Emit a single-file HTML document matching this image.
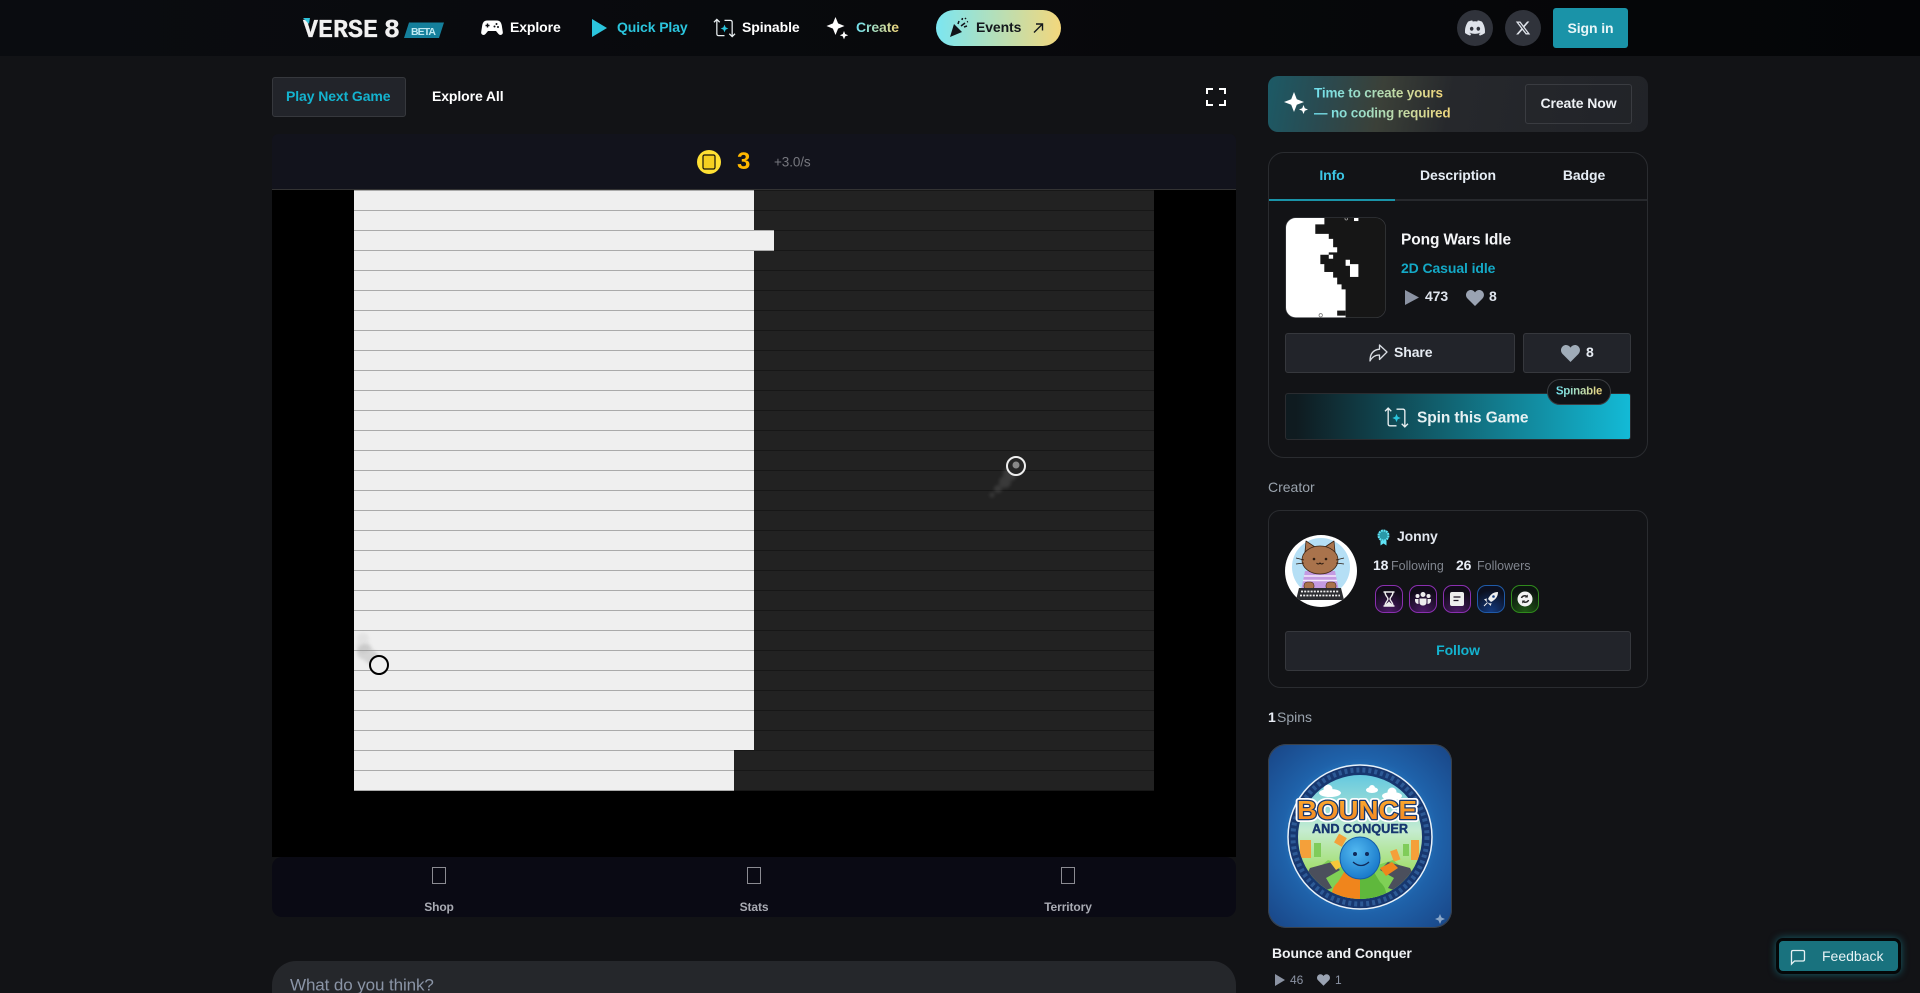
<!DOCTYPE html>
<html lang="en"><head><meta charset="utf-8"><title>Pong Wars Idle - Verse 8</title>
<style>
*{box-sizing:border-box;margin:0;padding:0}
html,body{width:1920px;height:993px;overflow:hidden;background:#121316;font-family:"Liberation Sans",sans-serif;color:#fff}
#p{position:relative;width:1920px;height:993px;overflow:hidden;background:#121316}
.a{position:absolute}
.t{position:absolute;white-space:nowrap;line-height:1;transform:translateY(-50%);font-size:14px;font-weight:700;letter-spacing:-.1px}
.c{transform:translate(-50%,-50%)}
.grad{background:linear-gradient(90deg,#6fe0ef,#f0d67c);-webkit-background-clip:text;background-clip:text;color:transparent}
.btn{position:absolute;background:#22242a;border:1px solid #36383d;border-radius:3px}
.w{position:absolute;background-color:#efefef;background-image:repeating-linear-gradient(to bottom,#aaa 0 1px,transparent 1px 20px)}
.d{position:absolute;background-color:#222;background-image:repeating-linear-gradient(to bottom,#171717 0 1px,transparent 1px 20px)}
.tofu{position:absolute;width:14px;height:17px;border:1px solid #8b8b92;top:867px}
.bdg{position:absolute;top:585px;width:28px;height:28px;border-radius:9px;border:1.5px solid #8a2fb0;background:radial-gradient(circle at 50% 100%,#4b1a66,#100c18 75%)}
svg{position:absolute;display:block;overflow:visible}
</style></head><body><div id="p">

<!-- header -->
<div class="a" style="left:0;top:0;width:1920px;height:56px;background:linear-gradient(90deg,#0a0c10,#08090c 50%,#040507)"></div>
<svg style="left:300px;top:15px" width="150" height="28" viewBox="0 0 150 28">
<text x="3" y="22" font-family="Liberation Mono" font-weight="700" font-size="26" fill="#f1f1f1" stroke="#f1f1f1" stroke-width=".3" textLength="75" lengthAdjust="spacingAndGlyphs">VERSE</text>
<text x="84" y="22" font-family="Liberation Mono" font-weight="700" font-size="26" fill="#f1f1f1" stroke="#f1f1f1" stroke-width=".3" textLength="16" lengthAdjust="spacingAndGlyphs">8</text>
<path d="M3 3h7l-1 6z" fill="#2fc4dc"/>
<path d="M109 7.500h35l-5 15.500h-35z" fill="#147f9b"/>
<text x="111" y="20" font-family="Liberation Sans" font-weight="700" font-size="10.500" fill="#bfe9f2" textLength="25">BETA</text>
</svg>
<svg style="left:481px;top:17px" width="22" height="22" viewBox="0 0 22 22"><path d="M6 3.500h10c2.700 0 4.200 1.800 4.800 5l1 6.500c.4 2.600-2.500 4-4.300 2l-2.500-3h-8l-2.500 3c-1.800 2-4.700.6-4.300-2l1-6.500c.6-3.200 2.100-5 4.800-5z" fill="#fff"/><path d="M6.500 6.500v4M4.500 8.500h4" stroke="#0a0c10" stroke-width="1.400"/><circle cx="15.500" cy="7" r="1" fill="#0a0c10"/><circle cx="13.500" cy="9.500" r="1" fill="#0a0c10"/><circle cx="17" cy="10" r="1" fill="#0a0c10"/></svg>
<span class="t" style="left:510px;top:27px">Explore</span>
<svg style="left:592px;top:19px" width="16" height="18" viewBox="0 0 16 18"><path d="M0 0l15 9-15 9z" fill="#2bc5dd"/></svg>
<span class="t" style="left:617px;top:27px;color:#2bc5dd">Quick Play</span>
<svg style="left:713px;top:17px" width="23" height="22" viewBox="0 0 24 22" fill="none" stroke="#e8eef0" stroke-width="1.300"><path d="M4 2V17q0 2 2 2h6M1 5l3-3 3 3"/><path d="M20 20V5q0-2-2-2h-6M17 17l3 3 3-3"/><path d="M12 7.500l1.200 2.800 2.800 1.200-2.800 1.200-1.200 2.800-1.200-2.800-2.800-1.200 2.800-1.200z" fill="#2bc5dd" stroke="none"/></svg>
<span class="t" style="left:742px;top:27px">Spinable</span>
<svg style="left:827px;top:17px" width="22" height="23" viewBox="0 0 22 23"><path d="M8.500 0l2.600 6.400 6.400 2.600-6.400 2.600-2.600 6.400-2.600-6.400L-.5 9l6.400-2.600z" fill="#fff"/><path d="M17 14l1.200 3 3 1.200-3 1.200-1.200 3-1.200-3-3-1.200 3-1.200z" fill="#fff"/></svg>
<span class="t grad" style="left:856px;top:27px">Create</span>
<div class="a" style="left:936px;top:10px;width:125px;height:36px;border-radius:18px;background:linear-gradient(90deg,#7be6f1,#f3d77c)"></div>
<svg style="left:949px;top:17px" width="20" height="21" viewBox="0 0 20 21" fill="#10151a"><path d="M1 20l4-13 8 8z"/><path d="M9 7l1-3M13 3l.5-2M12 9l4-3M15 10l3-1M16 2l1-1M18 5l1-.5" stroke="#10151a" stroke-width="1.500"/></svg>
<span class="t" style="left:976px;top:27px;color:#14181c;font-weight:700">Events</span>
<svg style="left:1032px;top:22px" width="12" height="12" viewBox="0 0 12 12" fill="none" stroke="#14181c" stroke-width="1.400"><path d="M2 10.500L10 2.500M4 2h6.500v6.500"/></svg>
<div class="a" style="left:1457px;top:10px;width:36px;height:36px;border-radius:50%;background:#30333b"></div>
<svg style="left:1465px;top:18px" width="20" height="20" viewBox="0 0 24 24"><path fill="#dfe3ea" d="M20.317 4.370a19.791 19.791 0 0 0-4.885-1.515.074.074 0 0 0-.079.037c-.21.375-.444.864-.608 1.250a18.270 18.270 0 0 0-5.487 0 12.640 12.640 0 0 0-.617-1.250.077.077 0 0 0-.079-.037A19.736 19.736 0 0 0 3.677 4.370a.07.07 0 0 0-.032.027C.533 9.046-.32 13.580.099 18.057a.082.082 0 0 0 .031.057 19.900 19.900 0 0 0 5.993 3.030.078.078 0 0 0 .084-.028c.462-.63.874-1.295 1.226-1.994a.076.076 0 0 0-.041-.106 13.107 13.107 0 0 1-1.872-.892.077.077 0 0 1-.008-.128 10.200 10.200 0 0 0 .372-.292.074.074 0 0 1 .077-.01c3.928 1.793 8.180 1.793 12.062 0a.074.074 0 0 1 .078.01c.12.098.246.198.373.292a.077.077 0 0 1-.006.127 12.299 12.299 0 0 1-1.873.892.077.077 0 0 0-.041.107c.36.698.772 1.362 1.225 1.993a.076.076 0 0 0 .084.028 19.839 19.839 0 0 0 6.002-3.030.077.077 0 0 0 .032-.054c.5-5.177-.838-9.674-3.549-13.660a.061.061 0 0 0-.031-.03zM8.020 15.330c-1.183 0-2.157-1.085-2.157-2.419 0-1.333.956-2.419 2.157-2.419 1.210 0 2.176 1.096 2.157 2.420 0 1.333-.956 2.418-2.157 2.418zm7.975 0c-1.183 0-2.157-1.085-2.157-2.419 0-1.333.955-2.419 2.157-2.419 1.210 0 2.176 1.096 2.157 2.420 0 1.333-.946 2.418-2.157 2.418z"/></svg>
<div class="a" style="left:1505px;top:10px;width:36px;height:36px;border-radius:50%;background:#30333b"></div>
<svg style="left:1515px;top:20px" width="16" height="16" viewBox="0 0 24 24"><path fill="#dfe3ea" d="M18.244 2.250h3.308l-7.227 8.260 8.502 11.240H16.170l-5.214-6.817L4.990 21.750H1.680l7.730-8.835L1.254 2.250H8.080l4.713 6.231zm-1.161 17.520h1.833L7.084 4.126H5.117z"/></svg>
<div class="a" style="left:1553px;top:8px;width:75px;height:40px;border-radius:3px;background:#1a93a8"></div>
<span class="t c" style="left:1590.500px;top:27.500px;color:#e8f6f8">Sign in</span>

<!-- top tabs -->
<div class="btn" style="left:272px;top:77px;width:134px;height:40px"></div>
<span class="t" style="left:286px;top:96px;color:#14b3cf">Play Next Game</span>
<span class="t" style="left:432px;top:96px">Explore All</span>
<svg style="left:1205px;top:87px" width="22" height="20" viewBox="0 0 22 20" fill="none" stroke="#fff" stroke-width="2"><path d="M2 7V2h6M14 2h6v5M20 13v5h-6M8 18H2v-5"/></svg>

<!-- game -->
<div class="a" style="left:272px;top:134px;width:964px;height:56px;background:#12131c;border-radius:6px 6px 0 0"></div>
<div class="a" style="left:272px;top:189px;width:964px;height:668px;background:#000;border-top:1px solid #333"></div>
<svg style="left:697px;top:150px" width="24" height="24" viewBox="0 0 24 24"><circle cx="12" cy="12" r="12" fill="#ffe033"/><rect x="6" y="5" width="12" height="14" rx="1.500" fill="#f5cf20" stroke="#15120a" stroke-width="1.200"/></svg>
<span class="t" style="left:737px;top:162px;color:#ffb800;font-size:24px;font-weight:700">3</span>
<span class="t" style="left:774px;top:162px;color:#77787f;font-size:13.500px;font-weight:400">+3.0/s</span>

<div class="w" style="left:354px;top:190px;width:400px;height:601px"></div>
<div class="d" style="left:754px;top:190px;width:400px;height:601px"></div>
<div class="w" style="left:754px;top:230px;width:20px;height:21px"></div>
<div class="d" style="left:734px;top:750px;width:20px;height:41px"></div>
<svg style="left:354px;top:190px" width="800" height="601" viewBox="0 0 800 601">
<defs><filter id="b" x="-50%" y="-50%" width="200%" height="200%"><feGaussianBlur stdDeviation="1.500"/></filter></defs>
<g fill="#999" opacity=".14" filter="url(#b)"><circle cx="9" cy="449" r="6"/><circle cx="9" cy="456" r="7"/></g>
<g fill="#888" opacity=".26" filter="url(#b)"><circle cx="11" cy="462" r="8"/><circle cx="17" cy="467" r="7"/><circle cx="20" cy="470" r="6"/></g>
<circle cx="25" cy="475" r="9" fill="#efefef" stroke="#000" stroke-width="2"/>
<g fill="#999" opacity=".2" filter="url(#b)"><circle cx="656" cy="284" r="7"/><circle cx="651" cy="292" r="6"/><circle cx="644" cy="299" r="4"/><circle cx="638" cy="305" r="2.500"/></g>
<circle cx="662" cy="276" r="9" fill="#262626" stroke="#eee" stroke-width="2"/><circle cx="662" cy="275" r="3.500" fill="#888"/>
</svg>

<div class="a" style="left:272px;top:857px;width:964px;height:60px;background:#0a0a14;border-radius:10px"></div>
<div class="tofu" style="left:432px"></div>
<div class="tofu" style="left:747px"></div>
<div class="tofu" style="left:1061px"></div>
<span class="t c" style="left:439px;top:907px;font-size:12px;color:#a9abb3">Shop</span>
<span class="t c" style="left:754px;top:907px;font-size:12px;color:#a9abb3">Stats</span>
<span class="t c" style="left:1068px;top:907px;font-size:12px;color:#a9abb3">Territory</span>

<!-- comment -->
<div class="a" style="left:272px;top:961px;width:964px;height:32px;background:#25272b;border-radius:24px 24px 0 0"></div>
<span class="t" style="left:290px;top:985px;font-size:17px;font-weight:400;color:#8a94a6;letter-spacing:-.1px">What do you think?</span>

<!-- banner -->
<div class="a" style="left:1268px;top:76px;width:380px;height:56px;border-radius:10px;background:linear-gradient(100deg,#1c5a66 0%,#2a4a50 15%,#3b4038 30%,#26282c 48%,#212328 100%)"></div>
<svg style="left:1284px;top:91px" width="24" height="25" viewBox="0 0 24 25"><path d="M10 1l2.800 7.200L20 11l-7.200 2.800L10 21l-2.800-7.200L0 11l7.200-2.800z" fill="#fff"/><path d="M19.500 14l1.300 3.200 3.200 1.300-3.200 1.300-1.300 3.200-1.300-3.200-3.200-1.300 3.200-1.300z" fill="#fff"/></svg>
<span class="t grad" style="left:1314px;top:93px;font-size:13.500px;letter-spacing:-.15px">Time to create yours</span>
<span class="t grad" style="left:1314px;top:113px;font-size:13.500px;letter-spacing:-.15px">— no coding required</span>
<div class="a" style="left:1525px;top:84px;width:107px;height:40px;border:1px solid #3a3c41;border-radius:3px"></div>
<span class="t c" style="left:1578.500px;top:103px;color:#eef1f5">Create Now</span>

<!-- info card -->
<div class="a" style="left:1268px;top:152px;width:380px;height:306px;border:1px solid #2a2c30;border-radius:16px"></div>
<div class="a" style="left:1269px;top:199px;width:378px;height:2px;background:#27292d"></div>
<div class="a" style="left:1269px;top:199px;width:126px;height:2px;background:#1a93a8"></div>
<span class="t c" style="left:1332px;top:175px;color:#3cc6e4">Info</span>
<span class="t c" style="left:1458px;top:175px;color:#e6edf5">Description</span>
<span class="t c" style="left:1584px;top:175px;color:#e6edf5">Badge</span>

<svg style="left:1285px;top:217px" width="101" height="101" viewBox="75 50 300 300">
<defs><clipPath id="tc"><rect x="77" y="52" width="297" height="297" rx="30"/></clipPath></defs>
<g clip-path="url(#tc)"><rect x="75" y="50" width="300" height="300" fill="#161616"/>
<path fill="#fff" d="M75 50H192V72H165V100H205V115H218V140H230V155H205V162H180V190H192V213H218V230H230V250H243V265H255V350H75z"/>
<rect x="205" y="162" width="13" height="28" fill="#161616"/><rect x="192" y="190" width="26" height="23" fill="#161616"/>
<rect x="205" y="162" width="13" height="12" fill="#fff"/>
<rect x="255" y="177" width="13" height="18" fill="#fff"/><rect x="268" y="190" width="25" height="38" fill="#fff"/>
<rect x="230" y="328" width="25" height="15" fill="#161616"/>
<rect x="280" y="52" width="13" height="10" fill="#fff"/>
<circle cx="257" cy="55" r="4" fill="none" stroke="#aaa" stroke-width="2"/><circle cx="181" cy="342" r="5" fill="#fff" stroke="#666" stroke-width="2"/></g>
<rect x="77" y="52" width="297" height="297" rx="30" fill="none" stroke="#3a3c40" stroke-width="2"/>
</svg>
<span class="t" style="left:1401px;top:240px;font-size:15.500px;color:#f5f6f8">Pong Wars Idle</span>
<span class="t" style="left:1401px;top:267.500px;font-size:14px;color:#14a9c6">2D Casual idle</span>
<svg style="left:1405px;top:290px" width="14" height="15" viewBox="0 0 14 15"><path d="M0 0l14 7.500L0 15z" fill="#8b93a3"/></svg>
<span class="t" style="left:1425px;top:296px;color:#dfe5ee;font-size:14px">473</span>
<svg style="left:1466px;top:290px" width="18" height="16" viewBox="0 0 18 16"><path d="M9 16L1.600 8.600C-1.800 5 .8 0 4.800 0 6.600 0 8 1 9 2.400 10 1 11.400 0 13.200 0c4 0 6.600 5 3.200 8.600z" fill="#9aa3b2"/></svg>
<span class="t" style="left:1489px;top:296px;color:#dfe5ee">8</span>

<div class="btn" style="left:1285px;top:333px;width:230px;height:40px"></div>
<svg style="left:1369px;top:344px" width="19" height="18" viewBox="0 0 19 18" fill="none" stroke="#d9dde3" stroke-width="1.300" stroke-linejoin="round"><path d="M10.500 1v4.200C4 5.800 1 10 1 17c2-4 5-6 9.500-6v4.500L18 8z"/></svg>
<span class="t" style="left:1394px;top:352px;color:#e6ebf2">Share</span>
<div class="btn" style="left:1523px;top:333px;width:108px;height:40px"></div>
<svg style="left:1561px;top:345px" width="19" height="17" viewBox="0 0 18 16"><path d="M9 16L1.600 8.600C-1.800 5 .8 0 4.800 0 6.600 0 8 1 9 2.400 10 1 11.400 0 13.200 0c4 0 6.600 5 3.200 8.600z" fill="#a0acb8"/></svg>
<span class="t" style="left:1586px;top:352px;color:#e6ebf2">8</span>

<div class="a" style="left:1285px;top:393px;width:346px;height:47px;border:1px solid #2a2c30;border-radius:3px;background:linear-gradient(90deg,#0f1b20 3%,#11606e 45%,#13bad6 100%)"></div>
<svg style="left:1384px;top:406px" width="25" height="23" viewBox="0 0 24 22" fill="none" stroke="#e8eef0" stroke-width="1.300"><path d="M4 2V17q0 2 2 2h6M1 5l3-3 3 3"/><path d="M20 20V5q0-2-2-2h-6M17 17l3 3 3-3"/><path d="M12 7.500l1.200 2.800 2.800 1.200-2.800 1.200-1.200 2.800-1.200-2.800-2.800-1.200 2.800-1.200z" fill="#2bc5dd" stroke="none"/></svg>
<span class="t" style="left:1417px;top:418px;font-size:15.500px;color:#e6f0f2">Spin this Game</span>
<div class="a" style="left:1547px;top:379px;width:64px;height:26px;border-radius:13px;background:#111316;border:1px solid #3a3c40"></div>
<span class="t grad c" style="left:1579px;top:392px;font-size:11.500px;font-weight:700;letter-spacing:-.2px">Spinable</span>

<!-- creator -->
<span class="t" style="left:1268px;top:487px;font-size:14px;font-weight:400;color:#9aa3ad;letter-spacing:0">Creator</span>
<div class="a" style="left:1268px;top:510px;width:380px;height:178px;border:1px solid #2a2c30;border-radius:12px"></div>
<svg style="left:1285px;top:535px" width="72" height="72" viewBox="0 0 72 72">
<defs><clipPath id="av"><circle cx="36" cy="36" r="36"/></clipPath></defs>
<g clip-path="url(#av)"><rect width="72" height="72" fill="#fff"/><circle cx="36" cy="32" r="29" fill="#b5dff5"/>
<path d="M20 36h30l4 20H16z" fill="#c39be2"/><path d="M19 41h32M18 45.500h34" stroke="#f3e9fb" stroke-width="1.600"/>
<path d="M20 17l1-11 9 6zM50 17l-1-11-9 6z" fill="#a9734c" stroke="#3a2415" stroke-width=".8" stroke-linejoin="round"/>
<ellipse cx="35" cy="25" rx="18" ry="14" fill="#a9734c" stroke="#3a2415" stroke-width=".8"/>
<circle cx="29" cy="24" r="1.300" fill="#2a1a10"/><circle cx="41" cy="24" r="1.300" fill="#2a1a10"/>
<path d="M31.500 28q1.800 2 3.500 0q1.800 2 3.500 0" fill="none" stroke="#2a1a10"/>
<path d="M11 23l8 2M11 29l8-1M59 23l-8 2M59 29l-8-1" stroke="#2a1a10" stroke-width=".8"/>
<rect x="19" y="47" width="10" height="8" rx="3.500" fill="#a9734c" stroke="#3a2415" stroke-width=".6"/><rect x="41" y="47" width="10" height="8" rx="3.500" fill="#a9734c" stroke="#3a2415" stroke-width=".6"/>
<path d="M14 53h42l3 12H11z" fill="#2c2d31"/><path d="M16 56.500h38M15 60.500h40" stroke="#eee" stroke-width="1.800" stroke-dasharray="2 1.200"/></g>
</svg>
<svg style="left:1376px;top:529px" width="15" height="17" viewBox="0 0 15 17"><circle cx="7.500" cy="6.500" r="5" fill="#2a98a8" stroke="#5fe3f5" stroke-width="2" stroke-dasharray="2 .6"/><path d="M4.500 11.500v5l3-2 3 2v-5" fill="#5fe3f5"/></svg>
<span class="t" style="left:1397px;top:536px;color:#e3e8f0">Jonny</span>
<span class="t" style="left:1373px;top:565px;color:#e8edf5">18</span>
<span class="t" style="left:1391px;top:565.500px;font-size:12.500px;font-weight:400;color:#80858e;letter-spacing:0">Following</span>
<span class="t" style="left:1456px;top:565px;color:#e8edf5">26</span>
<span class="t" style="left:1477px;top:565.500px;font-size:12.500px;font-weight:400;color:#80858e;letter-spacing:0">Followers</span>

<div class="bdg" style="left:1375px"></div>
<svg style="left:1382px;top:591px" width="14" height="16" viewBox="0 0 14 16"><path d="M1.500 1h11M1.500 15h11M3 1c0 4 3 5 3 7s-3 3-3 7M11 1c0 4-3 5-3 7s3 3 3 7" stroke="#eee" fill="none" stroke-width="1.400"/><path d="M3.500 15c0-3 3.500-3.500 3.500-5 0 1.500 3.500 2 3.500 5z" fill="#eee"/></svg>
<div class="bdg" style="left:1409px"></div>
<svg style="left:1415px;top:592px" width="16" height="14" viewBox="0 0 16 14" fill="#eee"><circle cx="8" cy="2.500" r="2.500"/><circle cx="2.500" cy="4" r="2"/><circle cx="13.500" cy="4" r="2"/><path d="M4.500 6.500h7v4c0 4-7 4-7 0zM0 7h3.500v5C1 12 0 10 0 8zM12.500 7H16v1c0 2-1 4-3.500 4z"/></svg>
<div class="bdg" style="left:1443px"></div>
<svg style="left:1450px;top:592px" width="14" height="14" viewBox="0 0 14 14"><rect width="14" height="14" rx="2" fill="#eee"/><path d="M3.500 5h7M3.500 8.500h5" stroke="#1a1020" stroke-width="1.300"/></svg>
<div class="bdg" style="left:1477px;border-color:#1f5aa8;background:radial-gradient(circle at 50% 100%,#123a80,#0c1020 75%)"></div>
<svg style="left:1483px;top:591px" width="16" height="16" viewBox="0 0 16 16"><path d="M15 1c-5 0-8 3-10 7l3 3c4-2 7-5 7-10z" fill="#eee"/><circle cx="10.500" cy="5.500" r="1.300" fill="#123a80"/><path d="M4 8l-2 .5 2 2M8 12l-.5 2-2-2M1 15l3.500-3.500" stroke="#eee" fill="none"/></svg>
<div class="bdg" style="left:1511px;border-color:#2f8a1c;background:radial-gradient(circle at 50% 100%,#1f5a14,#0c1410 75%)"></div>
<svg style="left:1517px;top:591px" width="16" height="16" viewBox="0 0 16 16"><circle cx="8" cy="8" r="7.500" fill="#f2f2f2"/><path d="M4.500 7c.5-2 3.500-3 5.500-1.500M11.500 9c-.5 2-3.500 3-5.500 1.500" stroke="#222" stroke-width="1.500" fill="none"/><path d="M10.800 3.500v3h-3M5.200 12.500v-3h3" fill="#222"/></svg>

<div class="btn" style="left:1285px;top:631px;width:346px;height:40px"></div>
<span class="t c" style="left:1458px;top:650px;color:#14b3cf">Follow</span>

<span class="t" style="left:1268px;top:717px;font-weight:700;color:#e8edf5">1</span>
<span class="t" style="left:1277px;top:717px;font-weight:400;color:#9aa3ad;letter-spacing:0">Spins</span>

<!-- spin thumbnail -->
<svg style="left:1268px;top:744px" width="184" height="184" viewBox="0 0 184 184">
<defs>
<radialGradient id="bg" cx="50%" cy="50%" r="65%"><stop offset="40%" stop-color="#2b8ed4"/><stop offset="65%" stop-color="#1f62aa"/><stop offset="100%" stop-color="#1a4a8c"/></radialGradient>
<linearGradient id="sky" x1="0" y1="0" x2="0" y2="1"><stop offset="0" stop-color="#63c8e0"/><stop offset=".45" stop-color="#c5ecd0"/><stop offset=".75" stop-color="#a4df72"/></linearGradient>
<linearGradient id="or" x1="0" y1="0" x2="0" y2="1"><stop offset="0" stop-color="#ffb030"/><stop offset="1" stop-color="#f08020"/></linearGradient>
<radialGradient id="ball" cx="40%" cy="35%" r="70%"><stop offset="0" stop-color="#52b8f0"/><stop offset="1" stop-color="#1676c8"/></radialGradient>
<clipPath id="in"><circle cx="92" cy="93" r="62"/></clipPath>
<clipPath id="th"><rect width="184" height="184" rx="18"/></clipPath>
</defs>
<g clip-path="url(#th)"><rect width="184" height="184" fill="url(#bg)"/>
<circle cx="92" cy="93" r="72" fill="#17376f" stroke="#e8f2fa" stroke-width="1.500"/>
<circle cx="92" cy="93" r="67" fill="none" stroke="#2d5a96" stroke-width="5" stroke-dasharray="3 3"/>
<g clip-path="url(#in)"><rect x="30" y="30" width="124" height="126" fill="url(#sky)"/>
<g fill="#fff"><ellipse cx="62" cy="49" rx="11" ry="4"/><circle cx="60" cy="45" r="4.500"/><ellipse cx="104" cy="46" rx="6" ry="3"/><circle cx="104" cy="44" r="3"/><ellipse cx="124" cy="52" rx="10" ry="4"/><circle cx="124" cy="48" r="4.500"/></g>
<g fill="#f4a03a"><rect x="32" y="96" width="11" height="18"/><rect x="68" y="91" width="9" height="10" transform="rotate(30 72 96)"/><rect x="143" y="96" width="8" height="20"/><rect x="124" y="106" width="7" height="11" transform="rotate(-20 127 112)"/></g>
<g fill="#80cc5a"><rect x="46" y="99" width="7" height="14"/><rect x="135" y="100" width="6" height="12"/></g>
<path d="M30 140l30-24 30 10h5l30-10 29 24v20H30z" fill="#7fd056"/>
<path d="M42 124l22-6 8 8-14 8 6 10-12 4-16-12z" fill="#4b4f5c"/><path d="M142 124l-22-6-8 8 14 8-6 10 12 4 16-12z" fill="#4b4f5c"/>
<path d="M92 125v33H65q-4-12 5-20l8-13z" fill="#f0851c"/><path d="M92 125v33h25q4-12-5-20l-8-13z" fill="#5fb83c"/>
<path d="M112 124l12-6 6 6-12 8z" fill="#f0851c"/><path d="M62 118l8-2 4 6-6 4z" fill="#f5c83a"/></g>
<text x="29" y="75" font-family="Liberation Sans" font-weight="700" font-size="26" textLength="120" lengthAdjust="spacingAndGlyphs" fill="none" stroke="#fff" stroke-width="6" stroke-linejoin="round">BOUNCE</text>
<text x="29" y="75" font-family="Liberation Sans" font-weight="700" font-size="26" textLength="120" lengthAdjust="spacingAndGlyphs" fill="url(#or)" stroke="#17376f" stroke-width="2.500" paint-order="stroke" stroke-linejoin="round">BOUNCE</text>
<text x="44" y="89" font-family="Liberation Sans" font-weight="700" font-size="12.500" textLength="96" lengthAdjust="spacingAndGlyphs" fill="#17376f" stroke="#17376f" stroke-width=".4">AND CONQUER</text>
<ellipse cx="92" cy="114" rx="20" ry="21" fill="url(#ball)" stroke="#145ca8" stroke-width="1"/>
<circle cx="87" cy="110" r="2" fill="#102a5a"/><circle cx="99" cy="110" r="2" fill="#102a5a"/>
<path d="M85 118q8 7 16 0" fill="none" stroke="#102a5a" stroke-width="1.300"/>
<path d="M172 173l1.500 3.500 3.500 1.500-3.500 1.500-1.500 3.500-1.500-3.500-3.500-1.500 3.500-1.500z" fill="#8aa6c8" transform="translate(0,-3)"/></g>
<rect x=".5" y=".5" width="183" height="183" rx="18" fill="none" stroke="#3a4048"/>
</svg>
<span class="t" style="left:1272px;top:953px;color:#f0f2f5">Bounce and Conquer</span>
<svg style="left:1275px;top:974px" width="10" height="12" viewBox="0 0 10 12"><path d="M0 0l10 6-10 6z" fill="#8b93a3"/></svg>
<span class="t" style="left:1290px;top:980px;font-size:12px;font-weight:400;color:#8b93a3;letter-spacing:0">46</span>
<svg style="left:1317px;top:974px" width="13" height="12" viewBox="0 0 18 16"><path d="M9 16L1.600 8.600C-1.800 5 .8 0 4.800 0 6.600 0 8 1 9 2.400 10 1 11.400 0 13.200 0c4 0 6.600 5 3.200 8.600z" fill="#9aa3b2"/></svg>
<span class="t" style="left:1335px;top:980px;font-size:12px;font-weight:400;color:#8b93a3">1</span>

<!-- feedback -->
<div class="a" style="left:1776px;top:938px;width:125px;height:36px;border-radius:7px;background:#19727e;border:3px solid #050708;box-shadow:0 0 8px rgba(30,170,190,.5)"></div>
<svg style="left:1790px;top:949px" width="16" height="16" viewBox="0 0 16 16" fill="none" stroke="#e6f1f3" stroke-width="1.300"><path d="M1.500 15V3q0-1.500 1.500-1.500h10q1.500 0 1.500 1.500v7.500q0 1.500-1.500 1.500H4.500z"/></svg>
<span class="t" style="left:1822px;top:956px;font-weight:400;color:#e8f3f5;letter-spacing:0">Feedback</span>
</div></body></html>
